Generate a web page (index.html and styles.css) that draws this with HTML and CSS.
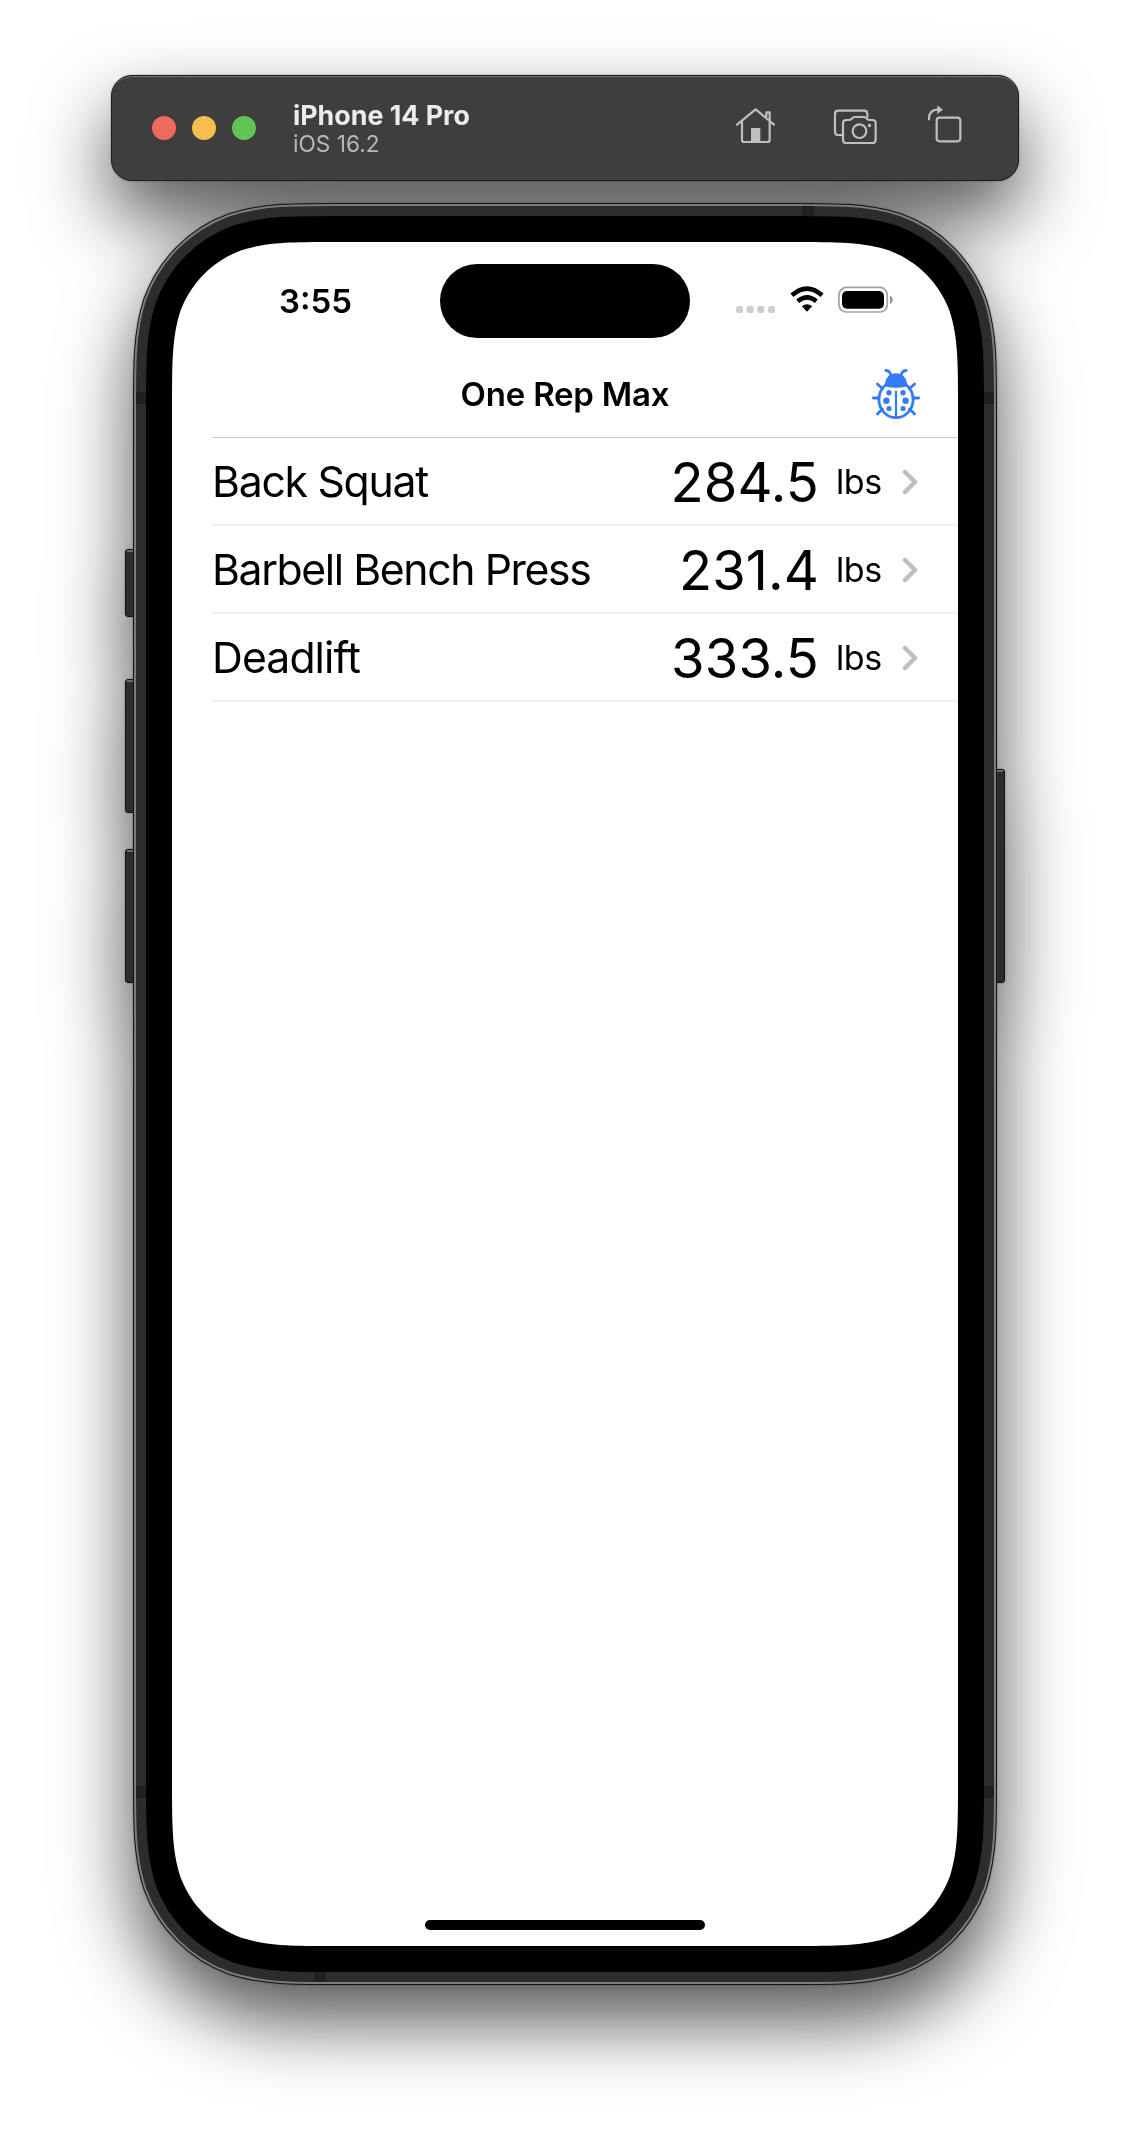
FILE: index.html
```html
<!DOCTYPE html>
<html lang="en">
<head>
<meta charset="utf-8">
<title>One Rep Max</title>
<link rel="stylesheet" href="styles.css">
</head>
<body>
<div class="simulator">
  <header class="toolbar">
    <div class="lights">
      <span class="light light-close"></span>
      <span class="light light-minimize"></span>
      <span class="light light-zoom"></span>
    </div>
    <div class="device">
      <div class="device-name">iPhone 14 Pro</div>
      <div class="device-os">iOS 16.2</div>
    </div>
    <div class="actions">
      <svg class="action" width="41" height="48" viewBox="45 42 123 144">
        <path d="M51 104L107 58L162 104M66 96V150Q66 156 72 156H143Q149 156 149 150V96M139 80V67H149V92"/>
        <rect class="solid" x="93" y="114" width="28" height="42" rx="2"/>
      </svg>
      <svg class="action" width="45" height="48" viewBox="339 42 135 144">
        <path d="M368 135H355Q345 135 345 125V72Q345 62 355 62H432Q442 62 442 72V80"/>
        <path d="M379 90H389C395 90 397 81 404 81H432C439 81 441 90 447 90H457Q467 90 467 100V149Q467 159 457 159H379Q369 159 369 149V100Q369 90 379 90Z"/>
        <circle cx="418.500" cy="123.500" r="20.500"/>
        <circle class="solid" cx="448.500" cy="106.500" r="5"/>
      </svg>
      <svg class="action" width="35" height="48" viewBox="621 42 105 144">
        <rect x="650" y="83" width="71" height="71" rx="9"/>
        <path d="M627 88C627 68 636 59 652 59"/>
        <path class="solid" d="M652 46L669 59L652 72Z"/>
      </svg>
    </div>
  </header>

  <main class="phone">
    <svg class="shell" width="864" height="1782" viewBox="-39 -39 864 1782">
      <defs>
        <path id="outline" d="M168.150 0H617.850C666.270 0 690.480 0 716.540 8.240C744.990 18.600 767.400 41.010 777.760 69.460C786 95.520 786 119.730 786 168.150V1535.850C786 1584.270 786 1608.480 777.760 1634.540C767.400 1662.990 744.990 1685.400 716.540 1695.760C690.480 1704 666.270 1704 617.850 1704H168.150C119.730 1704 95.520 1704 69.460 1695.760C41.010 1685.400 18.600 1662.990 8.240 1634.540C0 1608.480 0 1584.270 0 1535.850V168.150C0 119.730 0 95.520 8.240 69.460C18.600 41.010 41.010 18.600 69.460 8.240C95.520 0 119.730 0 168.150 0Z"/>
      </defs>
      <g class="keys">
        <rect x="-46.500" y="307.500" width="12" height="67" rx="2.500"/>
        <rect x="-46.500" y="437.500" width="12" height="133" rx="2.500"/>
        <rect x="-46.500" y="607.500" width="12" height="133" rx="2.500"/>
        <rect x="820.500" y="527.500" width="12" height="213" rx="2.500"/>
      </g>
      <path class="key-shine" d="M-45 309H-36M-45 439H-36M-45 609H-36M822 529H831"/>
      <use href="#outline" class="edge"/>
      <use href="#outline" class="rim"/>
      <use href="#outline" class="frame"/>
      <path class="bands" d="M630 -36h12v10h-12zM142 1730h12v10h-12zM-36 150h10v12h-10zM812 150h10v12h-10zM-36 1544h10v12h-10zM812 1544h10v12h-10z"/>
      <use href="#outline" class="bezel"/>
    </svg>

    <div class="screen">
      <div class="status">
        <time class="clock">3:55</time>
        <div class="island"></div>
        <div class="indicators">
          <svg width="40" height="28" viewBox="0 0 40 28" fill="#cdcdcd">
            <rect x="0" y="20" width="7" height="7" rx="2.300"/>
            <rect x="10.700" y="20" width="7" height="7" rx="2.300"/>
            <rect x="21.300" y="20" width="7" height="7" rx="2.300"/>
            <rect x="32" y="20" width="7" height="7" rx="2.300"/>
          </svg>
          <svg class="wifi" width="34" height="28" viewBox="0 0 34 28">
            <path d="M1.900 9.300Q17 -4.200 32.100 9.300"/>
            <path d="M7.700 15.200Q17 7.400 26.300 15.200"/>
            <path class="dot" d="M11.900 20.300Q17 16.300 22.100 20.300L17.500 25.300Q17 25.800 16.500 25.300Z"/>
          </svg>
          <svg width="56" height="28" viewBox="0 0 56 28">
            <rect x=".900" y="1.400" width="48.400" height="24.600" rx="7.600" fill="none" stroke="#a3a3a3" stroke-width="1.700"/>
            <rect x="4" y="5" width="42" height="17.700" rx="5"/>
            <path d="M52 9.800C55.500 11 55.500 16.800 52 18Z" fill="#8f8f8f"/>
          </svg>
        </div>
      </div>

      <div class="navbar">
        <h1 class="title">One Rep Max</h1>
        <svg class="bug" width="52" height="56" viewBox="0 0 52 56">
          <path d="M15.800 4.300Q19.800 4.800 20.800 8.500M36.200 4.300Q32.200 4.800 31.200 8.500M7.400 18L12.400 22.500M44.600 18L39.600 22.500M3.300 32H9M48.700 32H43M7.400 48L12.400 43M44.600 48L39.600 43"/>
          <ellipse cx="26" cy="33.500" rx="17.100" ry="18.200"/>
          <path class="seam" d="M26 25.500V52"/>
          <path class="solid" d="M14.800 20.200C14.800 12 19.500 7.200 26 7.200S37.200 12 37.200 20.200Q26 23.400 14.800 20.200Z"/>
          <g class="solid">
            <circle cx="19" cy="26.700" r="2.700"/><circle cx="33" cy="26.700" r="2.700"/>
            <circle cx="16.400" cy="34.700" r="3.200"/><circle cx="35.600" cy="34.700" r="3.200"/>
            <circle cx="19" cy="42.500" r="2.600"/><circle cx="33" cy="42.500" r="2.600"/>
          </g>
        </svg>
      </div>

      <ul class="lifts">
        <li class="lift">
          <span class="name name-squat">Back Squat</span>
          <span class="value">284.5</span>
          <span class="unit">lbs</span>
          <svg class="chevron" width="16" height="26" viewBox="0 0 16 26"><path d="M3 3L13 13L3 23"/></svg>
        </li>
        <li class="lift">
          <span class="name name-bench">Barbell Bench Press</span>
          <span class="value">231.4</span>
          <span class="unit">lbs</span>
          <svg class="chevron" width="16" height="26" viewBox="0 0 16 26"><path d="M3 3L13 13L3 23"/></svg>
        </li>
        <li class="lift">
          <span class="name name-deadlift">Deadlift</span>
          <span class="value">333.5</span>
          <span class="unit">lbs</span>
          <svg class="chevron" width="16" height="26" viewBox="0 0 16 26"><path d="M3 3L13 13L3 23"/></svg>
        </li>
      </ul>

      <div class="home-bar"></div>
    </div>
  </main>
</div>
</body>
</html>
```
FILE: styles.css
```css
* {
  box-sizing: border-box;
}

body {
  margin: 0;
  background: #fff;
  color: #000;
  font-family: Inter, "Liberation Sans", sans-serif;
}

.simulator {
  display: flex;
  flex-direction: column;
  align-items: center;
  gap: 22px;
  height: 2136px;
  padding-top: 75px;
  overflow: hidden;
  filter: drop-shadow(0 0 1px rgba(0, 0, 0, .3)) drop-shadow(0 36px 37px rgba(0, 0, 0, .67));
}

/* Window toolbar */

.toolbar {
  display: flex;
  align-items: center;
  flex: none;
  width: 908px;
  height: 106px;
  padding: 0 56px 0 40px;
  border: 1px solid #1c1c1c;
  border-radius: 21px;
  background: #3e3e3e;
  box-shadow: inset 0 2px 1px -1px #777;
}

.lights {
  display: flex;
  gap: 16px;
}

.light {
  width: 24px;
  height: 24px;
  border-radius: 50%;
}

.light-close { background: #ed6a5f; }
.light-minimize { background: #f5bf4f; }
.light-zoom { background: #61c555; }

.device {
  margin-left: 37px;
  padding-top: 1px;
}

.device-name {
  color: #ececec;
  font-size: 26.800px;
  font-weight: 700;
  line-height: 30px;
  white-space: nowrap;
}

.device-os {
  color: #b8b8b8;
  font-size: 22.700px;
  line-height: 28px;
}

.actions {
  display: flex;
  margin-left: auto;
}

.action {
  fill: none;
  stroke: #bfbfbf;
  stroke-width: 6.600;
  stroke-linecap: round;
  stroke-linejoin: round;
}

.action + .action { margin-left: 57px; }
.action + .action + .action { margin-left: 49px; }

.action .solid {
  fill: #bfbfbf;
  stroke: none;
}

/* Device body */

.phone {
  position: relative;
  flex: none;
  width: 864px;
  height: 1782px;
  padding: 39px;
}

.shell {
  position: absolute;
  inset: 0;
  overflow: visible;
}

.keys { fill: #2c2c2c; stroke: #141414; }
.key-shine { stroke: #6a6a6a; stroke-width: 2; }
.edge { fill: none; stroke: #141414; stroke-width: 78; }
.rim { fill: none; stroke: #7c7c7c; stroke-width: 76; }
.frame { fill: none; stroke: #2c2c2c; stroke-width: 72; }
.bands { fill: #202020; }
.bezel { fill: #fff; stroke: #000; stroke-width: 52; paint-order: stroke; }

/* Screen */

.screen {
  position: relative;
  display: flex;
  flex-direction: column;
  height: 1704px;
}

.status {
  display: grid;
  grid-template-columns: 268px 250px 268px;
  height: 107px;
  padding-top: 22px;
}

.clock {
  padding-left: 107px;
  font-size: 33px;
  font-weight: 600;
  line-height: 74px;
}

.island {
  height: 74px;
  border-radius: 37px;
  background: #000;
}

.indicators {
  display: flex;
  gap: 14px;
  padding: 22px 0 0 46px;
}

.wifi {
  fill: none;
  stroke: #000;
  stroke-width: 4.600;
}

.wifi .dot {
  fill: #000;
  stroke: none;
}

.navbar {
  display: grid;
  grid-template-columns: 88px 1fr 88px;
  align-items: center;
  height: 88px;
  padding-top: 1px;
}

.title {
  grid-column: 2;
  margin: 0;
  font-size: 33px;
  font-weight: 600;
  letter-spacing: -.200px;
  line-height: 40px;
  text-align: center;
}

.bug {
  justify-self: start;
  fill: none;
  stroke: #337bf7;
  stroke-width: 2.800;
  stroke-linecap: round;
}

.bug .seam { stroke-width: 2.200; }

.bug .solid {
  fill: #337bf7;
  stroke: none;
}

.lifts {
  margin: 0 0 0 40px;
  padding: 0;
  border-top: 1px solid #c9c9c9;
  list-style: none;
}

.lift {
  display: flex;
  align-items: center;
  height: 88px;
  padding: 1px 40px 0 0;
  border-bottom: 2px solid #efefef;
}

.name {
  flex: 1;
  font-size: 42.700px;
  white-space: nowrap;
}

.name-squat { letter-spacing: -1.250px; }
.name-bench { letter-spacing: -1.380px; }
.name-deadlift { letter-spacing: -.900px; }

.value {
  font-size: 54.300px;
  letter-spacing: .100px;
}

.unit {
  margin-left: 17px;
  font-size: 34px;
  letter-spacing: -.300px;
}

.chevron {
  margin-left: 20px;
  fill: none;
  stroke: #bfbfbf;
  stroke-width: 4.500;
  stroke-linecap: round;
  stroke-linejoin: round;
}

.home-bar {
  width: 280px;
  height: 10px;
  margin: auto auto 16px;
  border-radius: 5px;
  background: #000;
}
```
